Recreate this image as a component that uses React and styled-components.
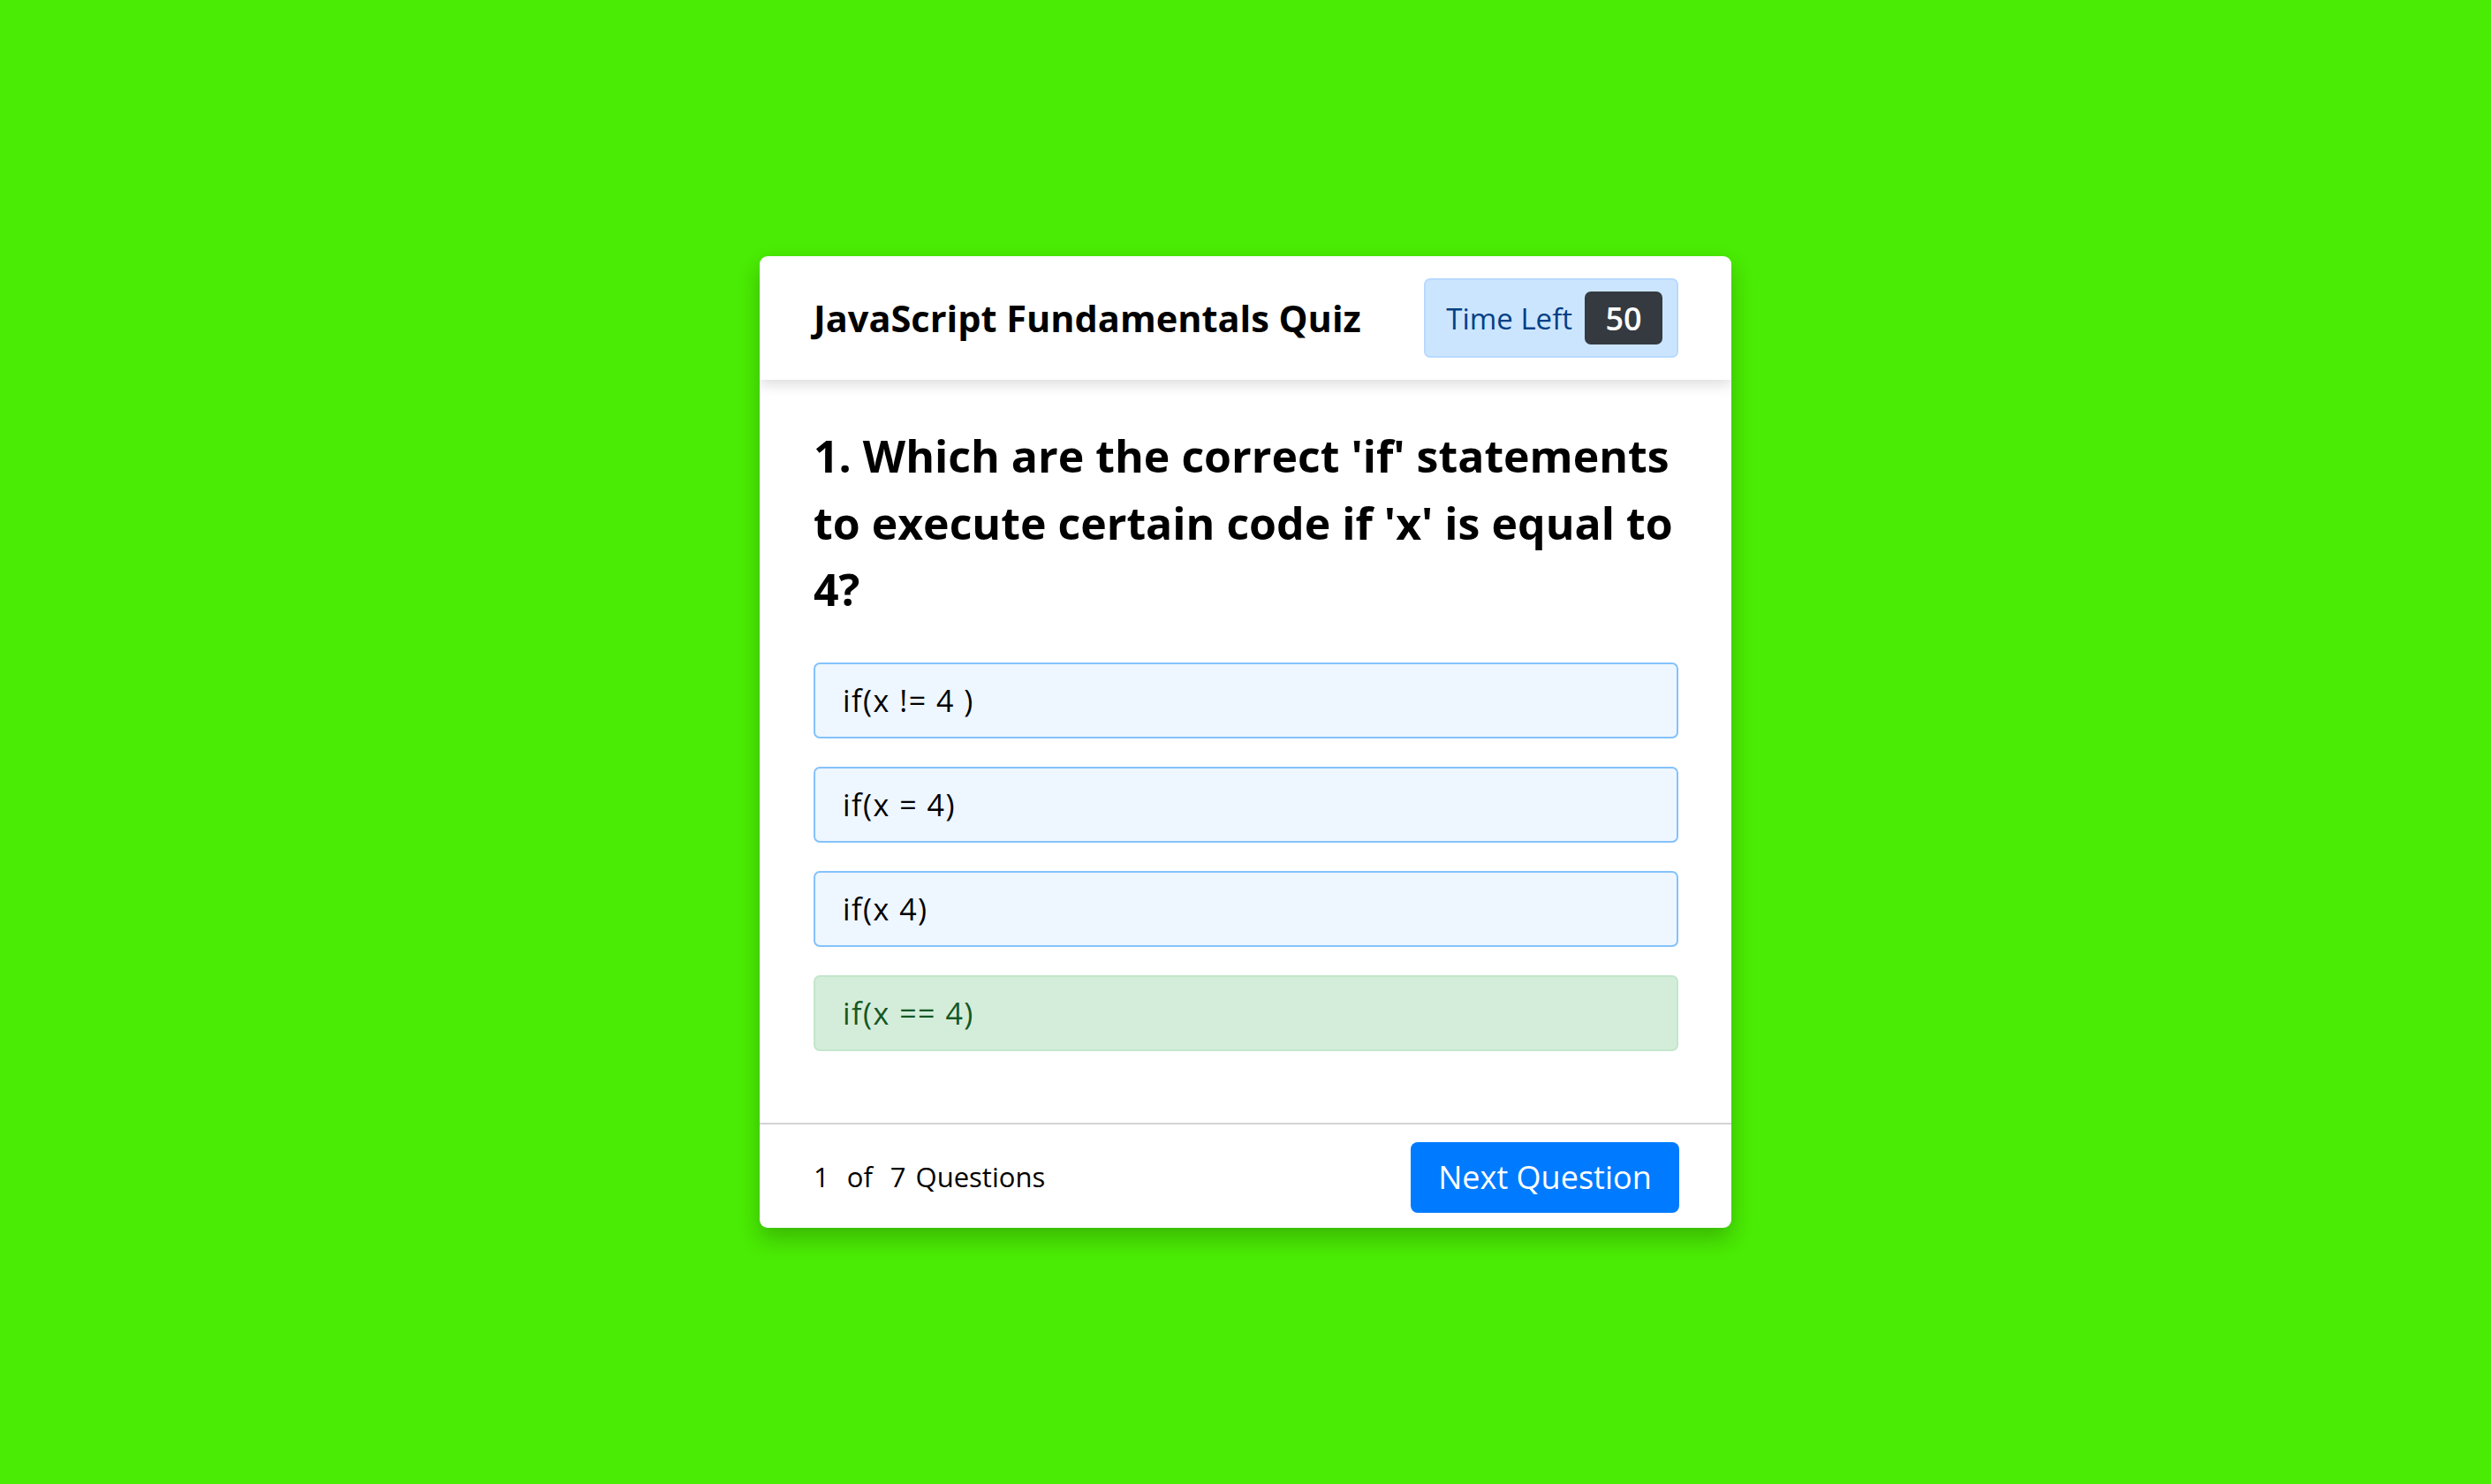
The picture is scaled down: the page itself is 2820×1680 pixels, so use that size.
import React from "react";
import styled, { createGlobalStyle } from "styled-components";

const Global = createGlobalStyle`
  * { box-sizing: border-box; }
  html, body { margin: 0; padding: 0; }
  body {
    background: #4aeb04;
    font-family: "Open Sans", "Noto Sans", sans-serif;
  }
`;

const Page = styled.div`
  width: 2820px;
  height: 1680px;
  display: flex;
  justify-content: center;
  align-items: flex-start;
  padding-top: 290px;
`;

const Card = styled.div`
  width: 1100px;
  height: 1100px;
  background: #fff;
  border-radius: 9px;
  box-shadow: 0 12px 24px rgba(0, 0, 0, 0.22);
  display: flex;
  flex-direction: column;
  overflow: hidden;
`;

const Header = styled.header`
  height: 140px;
  flex: none;
  display: flex;
  align-items: center;
  justify-content: space-between;
  padding: 0 60px 0 61px;
  box-shadow: 0 6px 14px rgba(0, 0, 0, 0.13);
  position: relative;
  z-index: 1;
`;

const Title = styled.h1`
  margin: 0;
  font-size: 41.5px;
  font-weight: 700;
  color: #000;
  white-space: nowrap;
`;

const Timer = styled.div`
  width: 288px;
  height: 90px;
  flex: none;
  display: flex;
  align-items: center;
  justify-content: flex-end;
  gap: 14px;
  padding: 0 16px 0 0;
  background: #cce5ff;
  border: 2px solid #b8daff;
  border-radius: 7px;
  color: #004085;
  font-size: 33px;
  white-space: nowrap;
`;

const Count = styled.span`
  width: 88px;
  height: 60px;
  flex: none;
  display: flex;
  align-items: center;
  justify-content: center;
  background: #343a40;
  color: #fff;
  font-weight: 600;
  font-size: 36px;
  border-radius: 7px;
`;

const Body = styled.main`
  flex: 1;
  padding: 49px 60px 0 61px;
  display: flex;
  flex-direction: column;
`;

const Question = styled.h2`
  margin: 0 0 44px;
  font-size: 50px;
  line-height: 75.5px;
  font-weight: 700;
  color: #000;
`;

const Options = styled.ul`
  list-style: none;
  margin: 0;
  padding: 0;
  display: flex;
  flex-direction: column;
  gap: 32px;
`;

const Option = styled.li`
  height: 86px;
  display: flex;
  align-items: center;
  padding: 0 31px;
  font-size: 34px;
  letter-spacing: 1.5px;
  border-radius: 7px;
  border: 2px solid ${(p) => (p.$correct ? "#c3e6cb" : "#84c2fb")};
  background: ${(p) => (p.$correct ? "#d4edda" : "#eef6ff")};
  color: ${(p) => (p.$correct ? "#155724" : "#000")};
`;

const Footer = styled.footer`
  height: 119px;
  flex: none;
  border-top: 2px solid #d3d3d3;
  display: flex;
  align-items: center;
  justify-content: space-between;
  padding: 0 59px 0 61px;
`;

const Progress = styled.div`
  font-size: 31px;
  color: #000;
  display: flex;
  align-items: baseline;
`;

const Num = styled.span`
  font-weight: 500;
  margin-right: ${(p) => p.$gap}px;
`;

const NextButton = styled.button`
  width: 304px;
  height: 80px;
  border: none;
  border-radius: 8px;
  background: #007bff;
  color: #fff;
  font-family: inherit;
  font-size: 36px;
  cursor: pointer;
  margin-top: 2px;
`;

const options = [
  { text: "if(x != 4 )" },
  { text: "if(x = 4)" },
  { text: "if(x 4)" },
  { text: "if(x == 4)", correct: true },
];

export default function App() {
  return (
    <>
      <Global />
      <Page>
        <Card>
          <Header>
            <Title>JavaScript Fundamentals Quiz</Title>
            <Timer>
              Time Left
              <Count>50</Count>
            </Timer>
          </Header>
          <Body>
            <Question>
              1. Which are the correct 'if' statements to execute certain code if 'x' is equal to 4?
            </Question>
            <Options>
              {options.map((o) => (
                <Option key={o.text} $correct={o.correct}>
                  {o.text}
                </Option>
              ))}
            </Options>
          </Body>
          <Footer>
            <Progress>
              <Num $gap={20}>1</Num>
              <Num $gap={20}>of</Num>
              <Num $gap={11}>7</Num>
              Questions
            </Progress>
            <NextButton>Next Question</NextButton>
          </Footer>
        </Card>
      </Page>
    </>
  );
}
